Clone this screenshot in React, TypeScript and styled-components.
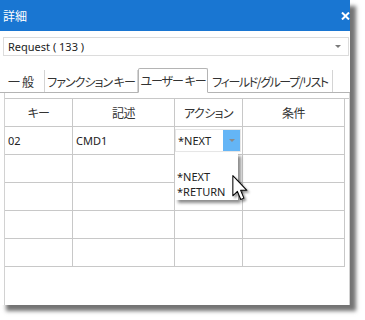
import React from 'react'
import styled, { createGlobalStyle } from 'styled-components'

const GlobalStyle = createGlobalStyle`
    body {
        margin: 0;
        background: #ffffff;
        font-family: "Noto Sans", "Noto Sans CJK JP", sans-serif;
    }
`

const Page = styled.div`
    width: 365px;
    height: 320px;
    background: #ffffff;
`
const Window = styled.div`
    position: relative;
    width: 350px;
    height: 305px;
    background: #ffffff;
    box-shadow: 6px 6px 4px rgba(0, 0, 0, 0.55);
    display: flex;
    flex-direction: column;
`
const TitleBar = styled.div`
    height: 31px;
    background: #1976d2;
    display: flex;
    align-items: center;
    justify-content: space-between;
    padding: 0 0 0 3px;
    overflow: hidden;
    flex-shrink: 0;
`
const Title = styled.span`
    color: #ffffff;
    font-family: "Noto Sans CJK JP", sans-serif;
    font-size: 12px;
`
const CloseIcon = styled.svg`
    width: 9px;
    height: 8px;
`
const Combo = styled.div`
    margin: 6px 1px 0 3px;
    height: 19px;
    border: 1px solid #dcdcdc;
    box-sizing: border-box;
    display: flex;
    align-items: center;
    justify-content: space-between;
    padding: 0 7px 0 4px;
    font-size: 11px;
    color: #222;
    flex-shrink: 0;
`
const Caret = styled.span<{ $color?: string }>`
    width: 0;
    height: 0;
    border-left: 3px solid transparent;
    border-right: 3px solid transparent;
    border-top: 3px solid ${p => p.$color || '#7a7a7a'};
`
const TabStrip = styled.div`
    margin-top: 12px;
    height: 24px;
    display: flex;
    align-items: flex-end;
    border-bottom: 1px solid #b4b4b4;
    flex-shrink: 0;
    font-family: "Noto Sans CJK JP", sans-serif;
    font-feature-settings: "palt";
    font-size: 12px;
    color: #333;
`
const Tab = styled.div<{ $active?: boolean; $w: number; $ls?: number }>`
    width: ${p => p.$w}px;
    box-sizing: border-box;
    height: ${p => (p.$active ? 25 : 22)}px;
    margin-bottom: ${p => (p.$active ? -1 : 0)}px;
    display: flex;
    align-items: center;
    justify-content: center;
    background: #ffffff;
    border: ${p => (p.$active ? '1px solid #b4b4b4' : 'none')};
    border-bottom: ${p => (p.$active ? '1px solid #ffffff' : 'none')};
    border-right: 1px solid ${p => (p.$active ? '#b4b4b4' : '#d4d4d4')};
    border-radius: ${p => (p.$active ? '2px 2px 0 0' : '0')};
    letter-spacing: ${p => p.$ls ?? -1}px;
    white-space: nowrap;
`
const Panel = styled.div`
    flex: 1;
    margin: 0 0 0 4px;
    width: 346px;
    box-sizing: border-box;
    border-left: 1px solid #d2d2d2;
    border-right: 1px solid #d2d2d2;
    padding-top: 5px;
`
const Table = styled.div`
    display: grid;
    grid-template-columns: 68px 102px 68px 102px;
    grid-auto-rows: 28px;
    border-top: 1px solid #c8c8c8;
    font-size: 11px;
    color: #222;
`
const Cell = styled.div<{ $head?: boolean }>`
    position: relative;
    box-sizing: border-box;
    border-right: 1px solid #c8c8c8;
    border-bottom: 1px solid #c8c8c8;
    display: flex;
    align-items: center;
    justify-content: ${p => (p.$head ? 'center' : 'flex-start')};
    padding-left: ${p => (p.$head ? 0 : 3)}px;
    font-family: ${p => (p.$head ? '"Noto Sans CJK JP", sans-serif' : '"Noto Sans", sans-serif')};
    font-size: ${p => (p.$head ? 12 : 11)}px;
    font-feature-settings: "palt";
    letter-spacing: ${p => (p.$head ? -0.6 : 0)}px;
    color: ${p => (p.$head ? '#333' : '#222')};
`
const CellCombo = styled.div`
    margin-left: -3px;
    width: 66px;
    height: 23px;
    box-sizing: border-box;
    border: 1px solid #e6e6e6;
    display: flex;
    align-items: center;
    justify-content: space-between;
    padding-left: 2px;
`
const DropButton = styled.div`
    width: 17px;
    height: 21px;
    background: #64b5f6;
    display: flex;
    align-items: center;
    justify-content: center;
`
const DropList = styled.div`
    position: absolute;
    left: 0;
    top: 26px;
    width: 63px;
    height: 47px;
    background: #ffffff;
    box-shadow: 3px 3px 3px rgba(0, 0, 0, 0.45);
    padding: 1px 0 0 2px;
    box-sizing: border-box;
    line-height: 15px;
    z-index: 2;
`
const Cursor = styled.svg`
    position: absolute;
    left: 57px;
    top: 48px;
    width: 16px;
    height: 26px;
    z-index: 3;
    filter: drop-shadow(2px 2px 1px rgba(0, 0, 0, 0.4));
`

const rows = [
    ['02', 'CMD1', 'combo', ''],
    ['', '', '', ''],
    ['', '', '', ''],
    ['', '', '', ''],
    ['', '', '', ''],
]

function App() {
    return (
        <Page>
            <GlobalStyle />
            <Window>
                <TitleBar>
                    <Title>詳細</Title>
                    <CloseIcon viewBox="0 0 9 8">
                        <path d="M1 0.5 L8 7.5 M8 0.5 L1 7.5" stroke="#ffffff" strokeWidth="2" />
                    </CloseIcon>
                </TitleBar>
                <Combo>
                    <span>Request ( 133 )</span>
                    <Caret />
                </Combo>
                <TabStrip>
                    <Tab $w={45} $ls={2}>一般</Tab>
                    <Tab $w={93}>ファンクション キー</Tab>
                    <Tab $w={70} $active>ユーザー キー</Tab>
                    <Tab $w={125} $ls={-1.4}>フィールド/グループ/リスト</Tab>
                </TabStrip>
                <Panel>
                    <Table>
                        <Cell $head>キー</Cell>
                        <Cell $head>記述</Cell>
                        <Cell $head>アクション</Cell>
                        <Cell $head>条件</Cell>
                        {rows.map((r, i) =>
                            r.map((v, j) =>
                                v === 'combo' ? (
                                    <Cell key={i + '-' + j}>
                                        <CellCombo>
                                            <span>*NEXT</span>
                                            <DropButton><Caret $color="#8a8a8a" /></DropButton>
                                        </CellCombo>
                                        <DropList>
                                            <div>&nbsp;</div>
                                            <div>*NEXT</div>
                                            <div>*RETURN</div>
                                        </DropList>
                                        <Cursor viewBox="0 0 12 20">
                                            <path d="M0.5 0.5 L0.5 16 L4 12.6 L6.6 18.8 L9 17.8 L6.5 11.8 L11.3 11.8 Z" fill="#ffffff" stroke="#000000" strokeWidth="0.8" strokeLinejoin="round" />
                                        </Cursor>
                                    </Cell>
                                ) : (
                                    <Cell key={i + '-' + j}>{v}</Cell>
                                )
                            )
                        )}
                    </Table>
                </Panel>
            </Window>
        </Page>
    )
}

export default App
